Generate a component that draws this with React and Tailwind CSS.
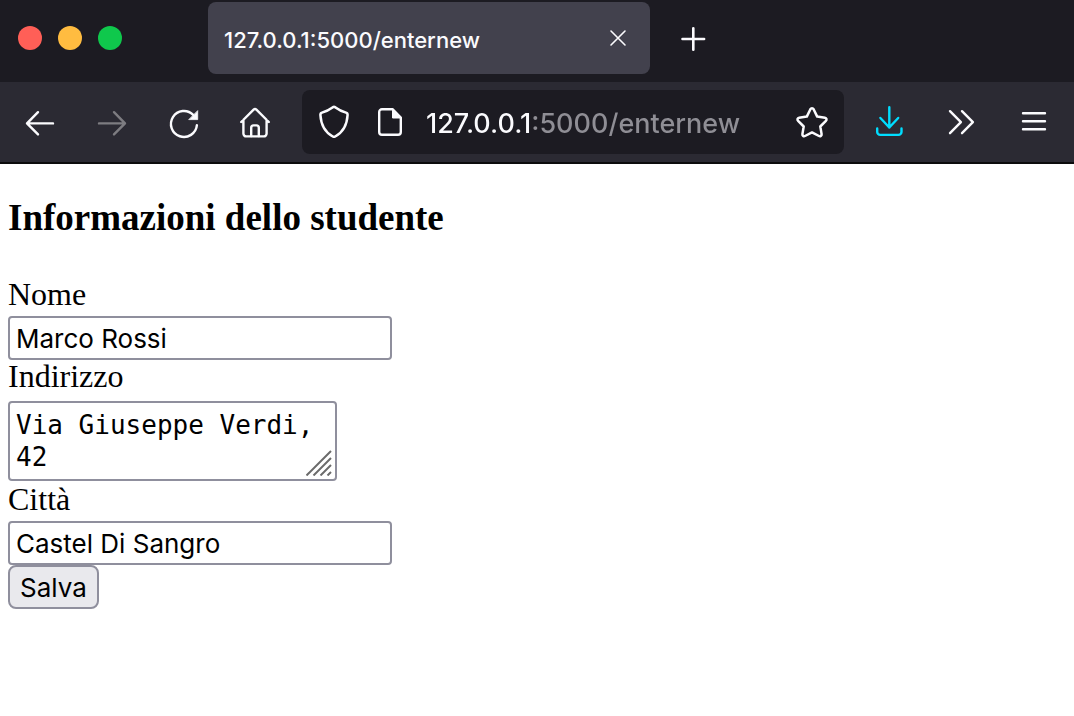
import React from "react";

function Icon({ children, className = "", strokeWidth = 2.4 }) {
  return (
    <svg
      viewBox="0 0 32 32"
      className={`size-8 shrink-0 overflow-visible ${className}`}
      fill="none"
      stroke="currentColor"
      strokeWidth={strokeWidth}
      strokeLinecap="round"
      strokeLinejoin="round"
      aria-hidden="true"
    >
      {children}
    </svg>
  );
}

function ToolButton({ label, children, className = "text-[#fbfbfe]", disabled = false }) {
  return (
    <button
      type="button"
      aria-label={label}
      disabled={disabled}
      className={`flex h-16 w-16 shrink-0 items-center justify-center rounded-lg ${className}`}
    >
      <Icon>{children}</Icon>
    </button>
  );
}

function TabBar() {
  return (
    <div className="flex h-[82px] items-start bg-[#1c1b22] pt-0.5 text-[#fbfbfe]">
      <div className="flex w-[208px] shrink-0 gap-4 pt-6 pl-[18px]">
        <button type="button" aria-label="Chiudi finestra" className="size-6 rounded-full bg-[#ff5f57]" />
        <button type="button" aria-label="Riduci a icona" className="size-6 rounded-full bg-[#ffbc40]" />
        <button type="button" aria-label="Ingrandisci" className="size-6 rounded-full bg-[#0fc84c]" />
      </div>
      <div className="flex h-18 w-[442px] items-center justify-between rounded-lg bg-[#42414d] pr-4 pl-4">
        <span className="pt-1 text-[22px] leading-7 font-medium">127.0.0.1:5000/enternew</span>
        <button type="button" aria-label="Chiudi scheda" className="flex size-8">
          <Icon strokeWidth={1.6}>
            <path d="M9 9 23 23M23 9 9 23" />
          </Icon>
        </button>
      </div>
      <button type="button" aria-label="Nuova scheda" className="ml-[27px] flex h-18 items-center">
        <Icon strokeWidth={2.6}>
          <path d="M16.300 6.300v21.400M5.500 17h21.600" />
        </Icon>
      </button>
    </div>
  );
}

function Toolbar() {
  return (
    <div className="flex h-[82px] items-center gap-[14px] border-b-2 border-[#0c0c0d] bg-[#2b2a33] px-2">
      <div className="flex gap-2">
        <ToolButton label="Indietro">
          <path d="M29 17.4H3.2M14 6.2 3 17.4l11 11" />
        </ToolButton>
        <ToolButton label="Avanti" disabled className="text-[#7d7c81]">
          <path d="M3 17.4h25.8M18 6.2l11 11.2-11 11" />
        </ToolButton>
        <ToolButton label="Ricarica">
          <path d="M28.9 19.2A13 13 0 1 1 25.200 8.800" />
          <path d="M29.700 5v8.600h-8.600z" fill="currentColor" strokeWidth="0.800" />
        </ToolButton>
        <ToolButton label="Pagina iniziale">
          <path d="M1.2 16 13.6 3.6a2 2 0 0 1 2.8 0L28.8 16M3.4 14v13.6a2.8 2.8 0 0 0 2.8 2.8h17.6a2.8 2.8 0 0 0 2.8-2.8V14" />
          <path d="M11.2 30v-8.2a2.4 2.4 0 0 1 2.4-2.4h2.8a2.4 2.4 0 0 1 2.4 2.4V30" />
        </ToolButton>
      </div>
      <div className="flex h-16 min-w-0 flex-1 items-center rounded-lg bg-[#1c1b22] px-4 text-[#fbfbfe]">
        <Icon strokeWidth={2.5}>
          <path d="M14.9 1.2a2.2 2.2 0 0 1 2.2 0C20.5 3.7 24 5.4 28 6.6c1.2.4 1.7 1.2 1.600 2.4C29 19 24.600 26.500 17.200 30.500a2.400 2.400 0 0 1-2.400 0C7.400 26.500 3 19 2.400 9c-.1-1.200.4-2 1.600-2.400C8 5.400 11.500 3.700 14.900 1.200z" />
        </Icon>
        <Icon className="ml-6" strokeWidth={2.4}>
          <path d="M18.500 3.200H8a2.800 2.800 0 0 0-2.800 2.800v20a2.800 2.800 0 0 0 2.800 2.800h16a2.800 2.800 0 0 0 2.800-2.800V11.500z" />
          <path d="M18.500 3v9h8.500z" fill="currentColor" strokeWidth="1" />
        </Icon>
        <input
          type="text"
          aria-label="Indirizzo web"
          defaultValue="127.0.0.1:5000/enternew"
          className="ml-5 h-10 min-w-0 flex-1 bg-[linear-gradient(90deg,#fbfbfe_105px,#8f8e95_105px)] bg-clip-text pt-1 text-[27px] font-medium text-transparent caret-white outline-none"
        />
        <button type="button" aria-label="Aggiungi ai segnalibri" className="flex">
          <Icon strokeWidth={2.5}>
            <path d="M14.400 3.200c.7-1.300 2.500-1.300 3.200 0l3.600 7.400 7.700 1.100c1.600.2 2.200 2.100 1 3.200l-5.600 5.600 1.300 7.600c.2 1.500-1.300 2.600-2.600 1.900L16 26.400 9 30c-1.300.7-2.800-.4-2.600-1.900l1.300-7.600-5.600-5.600c-1.200-1.100-.6-3 1-3.200l7.700-1.100z" />
          </Icon>
        </button>
      </div>
      <div className="flex gap-2">
        <ToolButton label="Download" className="text-[#00ddff]">
          <path d="M15.300 1.200v20.300M6.400 12l8.900 9.500 8.900-9.500M3.200 22.500v3.400a3 3 0 0 0 3 3h18.300a3 3 0 0 0 3-3v-3.400" />
        </ToolButton>
        <ToolButton label="Altri strumenti">
          <path d="M4 5.200 14.900 16.200 4 27.200M16 5.200l10.900 11L16 27.200" />
        </ToolButton>
        <ToolButton label="Apri menu">
          <path d="M5 7.300h22M5 15.300h22M5 23.300h22" />
        </ToolButton>
      </div>
    </div>
  );
}

function TextField({ id, label, value }) {
  return (
    <>
      <label htmlFor={id}>{label}</label>
      <input
        id={id}
        name={id}
        type="text"
        defaultValue={value}
        className="mt-1.5 h-11 w-96 max-w-full rounded-sm border-2 border-[#8f8f9d] bg-white px-1.5 font-[Inter,sans-serif] text-[26px]"
      />
    </>
  );
}

export default function App() {
  return (
    <div className="min-h-screen bg-white font-[Inter,sans-serif]">
      <header>
        <TabBar />
        <Toolbar />
      </header>
      <main className="px-2 pt-[33px] pb-8 font-['Liberation_Serif',serif] text-[32px] leading-8 text-black">
        <h3 className="text-[37px] leading-[42px] font-bold">Informazioni dello studente</h3>
        <form className="mt-[39px] flex flex-col items-start" onSubmit={(e) => e.preventDefault()}>
          <TextField id="nome" label="Nome" value="Marco Rossi" />
          <label htmlFor="indirizzo">Indirizzo</label>
          <div className="relative mt-[9px] mb-0.5 flex w-[329px] max-w-full">
            <textarea
              id="indirizzo"
              name="indirizzo"
              rows={2}
              defaultValue="Via Giuseppe Verdi, 42"
              className="h-20 w-full resize-none overflow-hidden rounded-sm border-2 border-[#8f8f9d] bg-white px-1.5 py-1.5 font-['DejaVu_Sans_Mono',monospace] text-[26px] leading-8"
            />
            <svg
              viewBox="0 0 26 26"
              className="pointer-events-none absolute right-[5px] bottom-[5px] size-[26px]"
              stroke="#6b6b6b"
              strokeWidth="2"
              aria-hidden="true"
            >
              <path d="M.5 25.500 25 1M7.500 25.500 25 8M14.500 25.500 25 15M21.500 25.500 25 22" />
            </svg>
          </div>
          <TextField id="citta" label="Città" value="Castel Di Sangro" />
          <button
            type="submit"
            className="h-11 rounded-lg border-2 border-[#8f8f9d] bg-[#e9e9ed] px-2.5 pt-0.5 font-[Inter,sans-serif] text-[26px]"
          >
            Salva
          </button>
        </form>
      </main>
    </div>
  );
}
